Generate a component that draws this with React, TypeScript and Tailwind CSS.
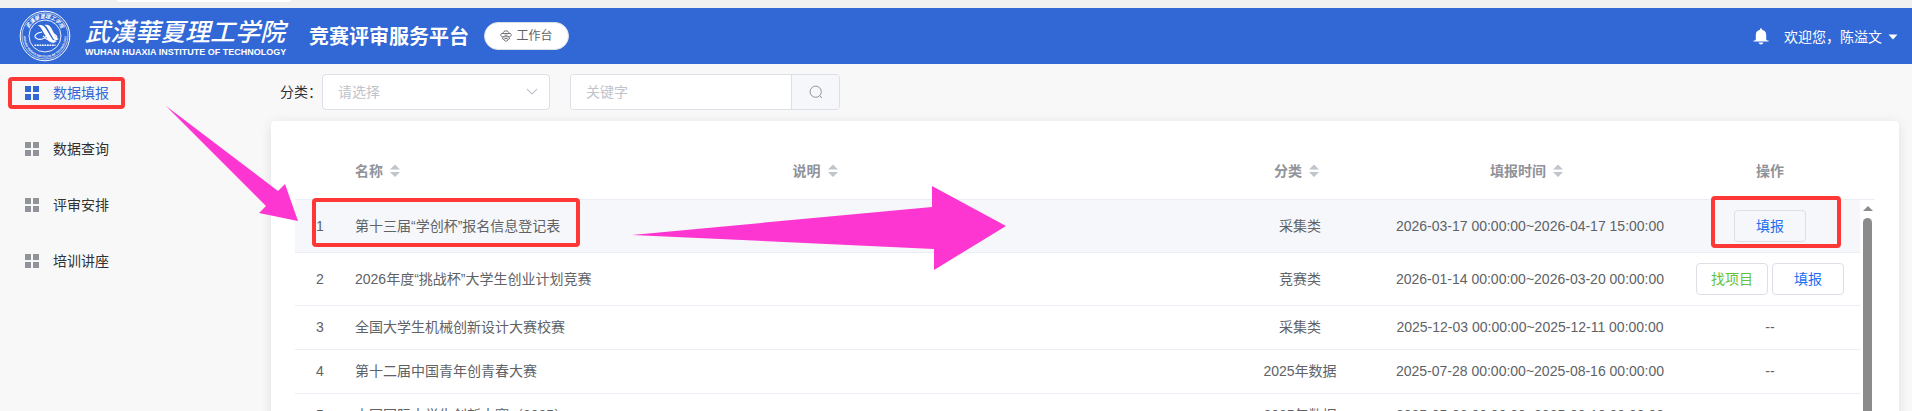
import { ReactNode } from 'react';

interface Row {
  id: number;
  name: string;
  category: string;
  period: string;
  actions: string[];
}

const menu = ['数据填报', '数据查询', '评审安排', '培训讲座'];

const rows: Row[] = [
  { id: 1, name: '第十三届“学创杯”报名信息登记表', category: '采集类', period: '2026-03-17 00:00:00~2026-04-17 15:00:00', actions: ['填报'] },
  { id: 2, name: '2026年度“挑战杯”大学生创业计划竞赛', category: '竞赛类', period: '2026-01-14 00:00:00~2026-03-20 00:00:00', actions: ['找项目', '填报'] },
  { id: 3, name: '全国大学生机械创新设计大赛校赛', category: '采集类', period: '2025-12-03 00:00:00~2025-12-11 00:00:00', actions: [] },
  { id: 4, name: '第十二届中国青年创青春大赛', category: '2025年数据', period: '2025-07-28 00:00:00~2025-08-16 00:00:00', actions: [] },
  { id: 5, name: '中国国际大学生创新大赛（2025）', category: '2025年数据', period: '2025-05-06 00:00:00~2025-08-10 00:00:00', actions: [] },
];

function Seal() {
  return (
    <svg viewBox="0 0 52 52" className="h-[52px] w-[52px] shrink-0" fill="none" stroke="#fff" aria-hidden="true">
      <defs>
        <path id="seal-top" d="M9.5 32 A17.6 17.6 0 1 1 42.5 32" />
        <path id="seal-bottom" d="M5.4 20 A21.5 21.5 0 1 0 46.6 20" />
      </defs>
      <circle cx="26" cy="26" r="24.8" strokeWidth="1" />
      <circle cx="26" cy="26" r="23" strokeWidth="0.6" />
      <circle cx="26" cy="26" r="16" strokeWidth="0.9" />
      <g fill="#fff" stroke="none">
        <text fontSize="5" fontStyle="italic" fontWeight="700" fontFamily="'Noto Sans CJK TC', sans-serif">
          <textPath href="#seal-top" startOffset="50%" textAnchor="middle">武漢華夏理工学院</textPath>
        </text>
        <text fontSize="3" fontWeight="700" fontFamily="'Liberation Sans', sans-serif">
          <textPath href="#seal-bottom" startOffset="50%" textAnchor="middle">WUHAN HUAXIA INSTITUTE OF TECHNOLOGY</textPath>
        </text>
        <path d="M18.5 15.5 C22 14 25 15.5 27 19 L33.5 29.5 C34.5 31 36 31.6 38 31 C35 34 31 33 29 30 L22.5 19 C21.5 17 20.5 16 18.5 15.5 Z" />
        <path d="M25.5 15 C29 14 31 16 32.5 18.5 L37 27 C38 28.6 39 29 40 28.6 C38 31 35.5 30.6 34 28 L29 19 C28 17 27 15.8 25.5 15 Z" />
      </g>
      <path d="M23 22 C17 23 14 26 17.5 28.5 C21 30.5 26 29 28 25 M35 24 C39 26 39 30.5 34 31 C29 31.4 26 28 24 26" strokeWidth="1.1" />
      <path d="M15.5 35.3 H36.5" strokeWidth="1.6" strokeDasharray="1.8 0.7" />
    </svg>
  );
}

function Header() {
  return (
    <header className="flex h-14 shrink-0 items-center bg-[#3267d6] pr-3.5 pl-[19px] text-white">
      <Seal />
      <div className="ml-3.5 w-[205px] whitespace-nowrap">
        <p className="font-['Noto_Sans_CJK_TC','Noto_Sans_CJK_SC',sans-serif] text-[25px] leading-8 font-medium italic">武漢華夏理工学院</p>
        <p className="text-[9px] leading-3 font-bold">WUHAN HUAXIA INSTITUTE OF TECHNOLOGY</p>
      </div>
      <h1 className="ml-[19px] pt-0.5 text-xl font-bold whitespace-nowrap">竞赛评审服务平台</h1>
      <button type="button" className="ml-[15px] flex h-7 w-[85px] items-center justify-center gap-1 rounded-full border border-[#dcdfe6] bg-white text-xs whitespace-nowrap text-[#606266]">
        <svg viewBox="0 0 12 12" className="h-3 w-3" fill="none" stroke="currentColor" aria-hidden="true">
          <path d="M3 3.5 C3 0 9 0 9 3.5 M1.5 3.5 H10.5 M1.5 3.5 C-.2 5.5 1.2 6.8 3 6.8 H9 C10.8 6.8 12.2 5.5 10.5 3.5 M3.5 6.8 C1.5 8.2 2.4 9.6 4 9.2 M8.5 6.8 C10.5 8.2 9.6 9.6 8 9.2 M4 9.2 C4 11.8 8 11.8 8 9.2 M4.5 5.2 H7.5 M4.5 8.6 H7.5" strokeWidth="0.9" />
        </svg>
        工作台
      </button>
      <button type="button" aria-label="消息" className="ml-auto">
        <svg viewBox="0 0 16 17" className="h-[17px] w-4" fill="currentColor" aria-hidden="true">
          <path d="M7 1.2 a1 1 0 0 1 2 0 V1.8 C11.8 2.3 13.2 4.4 13.2 7 V11.5 L14 12.4 H15.5 V13.5 H.5 V12.4 H2 L2.8 11.5 V7 C2.8 4.4 4.2 2.3 7 1.8 Z M5.5 14.4 H10.5 C10 15.6 9.2 16.4 8 16.4 S6 15.6 5.5 14.4 Z" />
        </svg>
      </button>
      <button type="button" className="ml-[15px] flex items-center gap-1.5 pt-0.5 text-sm whitespace-nowrap">
        欢迎您，陈溢文
        <svg viewBox="0 0 10 6" className="h-1.5 w-2.5" fill="currentColor" aria-hidden="true">
          <path d="M0.5 0.5 H9.5 L5 5.5 Z" />
        </svg>
      </button>
    </header>
  );
}

function Sidebar() {
  return (
    <nav className="w-[271px] shrink-0 pt-px">
      {menu.map((label, i) => (
        <a
          key={label}
          href="#"
          className={`flex h-14 items-center gap-3.5 pl-[25px] text-sm ${i === 0 ? 'text-[#3267d6]' : 'text-[#303133]'}`}
        >
          <svg viewBox="0 0 14 14" className={`h-3.5 w-3.5 ${i === 0 ? 'text-[#3267d6]' : 'text-[#909399]'}`} fill="currentColor" aria-hidden="true">
            <path d="M0 0h6v6H0zM8 0h6v6H8zM0 8h6v6H0zM8 8h6v6H8z" />
          </svg>
          {label}
        </a>
      ))}
    </nav>
  );
}

function Filters() {
  return (
    <form className="flex items-center pt-2.5 pl-[9px] text-sm">
      <label htmlFor="category" className="text-[#303133]">分类：</label>
      <div className="relative">
        <select id="category" defaultValue="" className="h-9 w-[228px] appearance-none rounded border border-[#dcdfe6] bg-white pl-[15px] text-[#c0c4cc]">
          <option value="">请选择</option>
          <option value="collect">采集类</option>
          <option value="contest">竞赛类</option>
        </select>
        <svg viewBox="0 0 12 7" className="pointer-events-none absolute top-3.5 right-3 h-[7px] w-3" fill="none" stroke="#c0c4cc" aria-hidden="true">
          <path d="M1 1 L6 6 L11 1" strokeWidth="1.1" />
        </svg>
      </div>
      <div className="ml-5 flex h-9 w-[270px] overflow-hidden rounded border border-[#dcdfe6]">
        <input type="text" aria-label="关键字" placeholder="关键字" className="min-w-0 flex-1 bg-white px-[15px] placeholder:text-[#c0c4cc]" />
        <button type="button" aria-label="搜索" className="flex w-12 items-center justify-center border-l border-[#dcdfe6] bg-[#f5f7fa] text-[#909399]">
          <svg viewBox="0 0 14 14" className="h-3.5 w-3.5" fill="none" stroke="currentColor" aria-hidden="true">
            <circle cx="6.7" cy="6.7" r="5.6" />
            <path d="M10.6 10.6 L13 13" />
          </svg>
        </button>
      </div>
    </form>
  );
}

function Columns() {
  return (
    <colgroup>
      <col className="w-[50px]" />
      <col />
      <col />
      <col className="w-40" />
      <col className="w-[300px]" />
      <col className="w-[180px]" />
    </colgroup>
  );
}

function SortHead({ children, center }: { children: ReactNode; center?: boolean }) {
  return (
    <th scope="col" className="px-2.5 font-bold">
      <button type="button" className={`flex w-full items-center ${center ? 'justify-center' : ''}`}>
        {children}
        <span className="flex w-6 justify-center">
          <svg viewBox="0 0 10 14" className="h-3.5 w-2.5" fill="#c0c4cc" aria-hidden="true">
            <path d="M0 5.5 L5 0.5 L10 5.5 Z M0 8 L5 13 L10 8 Z" />
          </svg>
        </span>
      </button>
    </th>
  );
}

function ActionButton({ label }: { label: string }) {
  return (
    <button
      type="button"
      className={`h-8 w-[72px] rounded border border-[#dcdfe6] ${label === '填报' ? 'text-[#1a6ff0]' : 'text-[#67c23a]'}`}
    >
      {label}
    </button>
  );
}

function DataTable() {
  return (
    <section className="mt-[11px] mr-[13px] flex-1 rounded bg-white px-6 pt-[22px] shadow-[0_2px_12px_0_rgba(0,0,0,0.1)]">
      <div className="border-b border-[#ebeef5] pr-[15px]">
        <table className="w-full table-fixed text-sm text-[#909399]">
          <Columns />
          <thead>
            <tr className="h-14">
              <th scope="col" aria-label="序号" />
              <SortHead>名称</SortHead>
              <SortHead>说明</SortHead>
              <SortHead center>分类</SortHead>
              <SortHead center>填报时间</SortHead>
              <th scope="col" className="font-bold">操作</th>
            </tr>
          </thead>
        </table>
      </div>
      <div className="flex">
        <table className="min-w-0 flex-1 table-fixed border-separate border-spacing-0 text-sm text-[#606266] [&_td]:border-b [&_td]:border-[#ebeef5]">
          <Columns />
          <tbody>
            {rows.map((row) => (
              <tr
                key={row.id}
                className={`${row.actions.length ? 'h-[53px]' : 'h-11 [&>td]:pb-0.5'} ${row.id === 1 ? 'bg-[#f5f7fa]' : ''}`}
              >
                <td className="text-center">{row.id}</td>
                <td className="px-2.5">{row.name}</td>
                <td />
                <td className="text-center">{row.category}</td>
                <td className="text-center whitespace-nowrap">{row.period}</td>
                <td className="text-center">
                  {row.actions.length ? (
                    <div className="flex justify-center gap-1">
                      {row.actions.map((a) => <ActionButton key={a} label={a} />)}
                    </div>
                  ) : '--'}
                </td>
              </tr>
            ))}
          </tbody>
        </table>
        <div className="flex w-[15px] flex-col items-center gap-[7px] pt-1.5" aria-hidden="true">
          <svg viewBox="0 0 10 5" className="h-[5px] w-2.5" fill="#8b8b8b">
            <path d="M0 5 L5 0 L10 5 Z" />
          </svg>
          <div className="w-[9px] flex-1 rounded-full bg-[#8b8b8b]" />
        </div>
      </div>
    </section>
  );
}

// Guide marks drawn over the page: where to click, in order
function Guides() {
  return (
    <svg className="pointer-events-none absolute inset-0 h-full w-full" aria-hidden="true">
      <g fill="#fd35d1">
        <path d="M166 106 L278 191 L285 184 L298 221 L259 213 L266 206 Z" />
        <path d="M632 235 L932 207 V186 L1006 226 L934 270 V249 Z" />
      </g>
      <g fill="none" stroke="#fe3737" strokeWidth="4">
        <rect x="10" y="79" width="113" height="28" rx="2" />
        <rect x="314" y="200" width="264" height="45" rx="2" />
        <rect x="1713" y="198" width="126" height="48" rx="2" />
      </g>
    </svg>
  );
}

export default function App() {
  return (
    <div className="relative flex h-screen flex-col overflow-hidden bg-[#f8f8f8] font-['Liberation_Sans','Noto_Sans_CJK_SC',sans-serif]">
      <div className="h-2 shrink-0 bg-[#f0f0f0] pl-[117px]">
        <div className="h-0.5 w-[174px] rounded-b bg-white" />
      </div>
      <Header />
      <div className="flex flex-1">
        <Sidebar />
        <main className="flex min-w-0 flex-1 flex-col">
          <Filters />
          <DataTable />
        </main>
      </div>
      <Guides />
    </div>
  );
}
